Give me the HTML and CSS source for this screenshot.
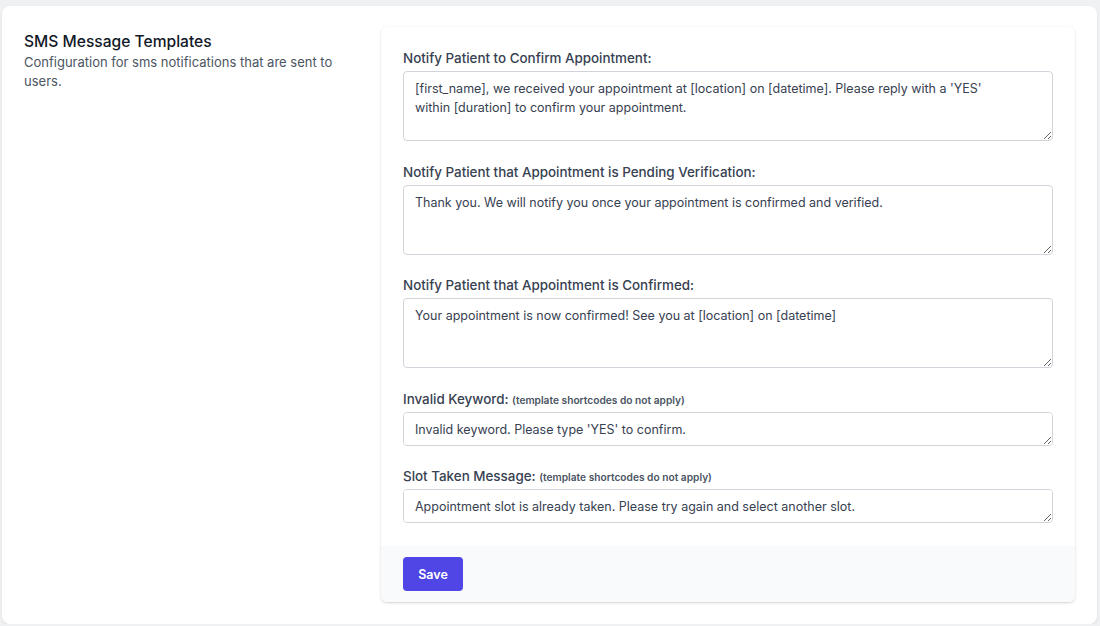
FILE: index.html
```html
<!DOCTYPE html>
<html lang="en">
<head>
    <meta charset="UTF-8">
    <meta name="viewport" content="width=device-width, initial-scale=1.0">
    <title>SMS Message Templates</title>
    <link rel="stylesheet" href="styles.css">
</head>
<body>
    <div class="panel">
        <div class="intro">
            <h3>SMS Message Templates</h3>
            <p>Configuration for sms notifications that are sent to users.</p>
        </div>

        <form class="card" onsubmit="return false;">
            <div class="card-body">
                <div class="field">
                    <label>Notify Patient to Confirm Appointment:</label>
                    <textarea class="tall">[first_name], we received your appointment at [location] on [datetime]. Please reply with a 'YES'
within [duration] to confirm your appointment.</textarea>
                </div>
                <div class="field">
                    <label>Notify Patient that Appointment is Pending Verification:</label>
                    <textarea class="tall">Thank you. We will notify you once your appointment is confirmed and verified.</textarea>
                </div>
                <div class="field">
                    <label>Notify Patient that Appointment is Confirmed:</label>
                    <textarea class="tall">Your appointment is now confirmed! See you at [location] on [datetime]</textarea>
                </div>
                <div class="field">
                    <label>Invalid Keyword: <small>(template shortcodes do not apply)</small></label>
                    <textarea class="short">Invalid keyword. Please type 'YES' to confirm.</textarea>
                </div>
                <div class="field">
                    <label>Slot Taken Message: <small>(template shortcodes do not apply)</small></label>
                    <textarea class="short">Appointment slot is already taken. Please try again and select another slot.</textarea>
                </div>
            </div>
            <div class="card-footer">
                <button type="submit">Save</button>
            </div>
        </form>
    </div>
</body>
</html>
```

FILE: styles.css
```css
body { margin: 0; padding: 6px 3px 0 2px; background: #f0f1f3; font-family: Inter, "Noto Sans", sans-serif; color: #374151; }
.panel { background: #fff; border-radius: 8px; box-shadow: 0 1px 3px rgba(0,0,0,0.08); padding: 21px 22px 22px; display: grid; grid-template-columns: 335px 1fr; gap: 22px; align-items: start; }
.intro h3 { margin: 4px 0 0; font-size: 15.6px; font-weight: 500; color: #111827; line-height: 22px; }
.intro p { margin: 0; font-size: 13px; line-height: 19px; color: #4b5563; }
.card { background: #fff; border-radius: 6px; box-shadow: 0 1px 3px rgba(0,0,0,0.12), 0 1px 2px rgba(0,0,0,0.06); overflow: hidden; }
.card-body { padding: 22px 22px 23px; display: flex; flex-direction: column; gap: 21.6px; }
.field label { display: block; font-size: 13.4px; font-weight: 500; line-height: 18px; height: 18px; margin-bottom: 4px; color: #374151; }
.field label small { font-size: 10.2px; line-height: 1; color: #4b5563; font-weight: 600; }
textarea { display: block; box-sizing: border-box; width: 100%; border: 1px solid #d1d5db; border-radius: 4px; padding: 7px 11px; font-family: inherit; font-size: 12.5px; line-height: 19px; color: #374151; resize: vertical; }
textarea.tall { height: 70px; }
textarea.short { height: 34px; }
.card-footer { background: #f9fafb; padding: 11px 22px; }
button { background: #4f46e5; color: #fff; border: none; border-radius: 4px; height: 34px; width: 60px; font-family: inherit; font-size: 12.5px; font-weight: 600; }
```
